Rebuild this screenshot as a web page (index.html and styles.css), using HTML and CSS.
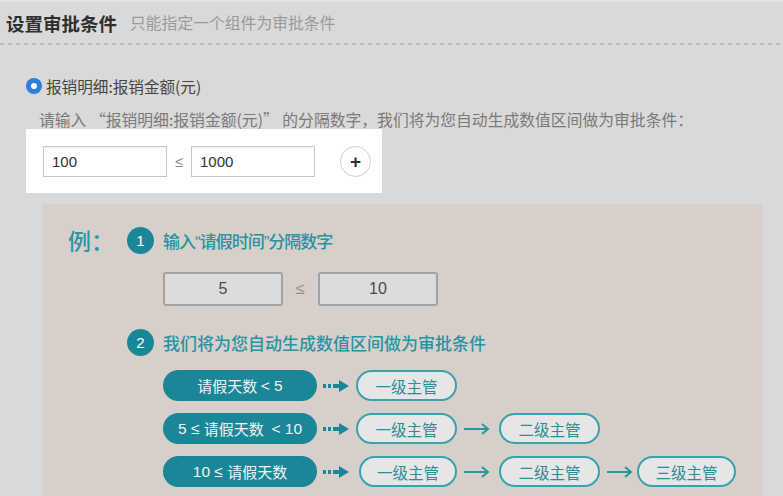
FILE: index.html
```html
<!DOCTYPE html>
<html lang="zh-CN">
<head>
<meta charset="utf-8">
<title>设置审批条件</title>
<link rel="stylesheet" href="styles.css">
</head>
<body>
<div class="page">
  <div class="header">
    <span class="title">设置审批条件</span>
    <span class="subtitle">只能指定一个组件为审批条件</span>
  </div>
  <div class="dash"></div>

  <div class="section">
    <div class="radio-row">
      <span class="radio"><span class="radio-dot"></span></span>
      <span class="radio-label">报销明细:报销金额(元)</span>
    </div>
    <div class="hint">请输入 “报销明细:报销金额(元)” 的分隔数字，我们将为您自动生成数值区间做为审批条件：</div>
    <div class="input-card">
      <div class="field">100</div>
      <span class="le">≤</span>
      <div class="field">1000</div>
      <button class="plus" type="button">+</button>
    </div>
  </div>

  <div class="example">
    <div class="ex-label">例：</div>
    <div class="ex-body">
      <div class="step">
        <span class="num">1</span>
        <span class="step-text step-text-1">输入<span class="q">“</span>请假时间<span class="q">”</span>分隔数字</span>
      </div>
      <div class="demo-inputs">
        <div class="demo-field">5</div>
        <span class="demo-le">≤</span>
        <div class="demo-field">10</div>
      </div>
      <div class="step step2">
        <span class="num">2</span>
        <span class="step-text">我们将为您自动生成数值区间做为审批条件</span>
      </div>
      <div class="flows">
        <div class="flow">
          <span class="cond">请假天数 <span class="lat">&lt; 5</span></span>
          <svg class="dots" width="27" height="12" viewBox="0 0 27 12"><rect x="0" y="4" width="3" height="4"/><rect x="5" y="4" width="3" height="4"/><rect x="10" y="4" width="7" height="4"/><polygon points="16,0 26,6 16,12"/></svg>
          <span class="mgr">一级主管</span>
        </div>
        <div class="flow">
          <span class="cond"><span class="lat">5 ≤ </span>请假天数 <span class="lat"> &lt; 10</span></span>
          <svg class="dots" width="27" height="12" viewBox="0 0 27 12"><rect x="0" y="4" width="3" height="4"/><rect x="5" y="4" width="3" height="4"/><rect x="10" y="4" width="7" height="4"/><polygon points="16,0 26,6 16,12"/></svg>
          <span class="mgr">一级主管</span>
          <svg class="arrow" width="27" height="12" viewBox="0 0 27 12"><path d="M1 6H25M19 1L25 6L19 11"/></svg>
          <span class="mgr">二级主管</span>
        </div>
        <div class="flow flow3">
          <span class="cond"><span class="lat">10 ≤ </span>请假天数</span>
          <svg class="dots" width="27" height="12" viewBox="0 0 27 12"><rect x="0" y="4" width="3" height="4"/><rect x="5" y="4" width="3" height="4"/><rect x="10" y="4" width="7" height="4"/><polygon points="16,0 26,6 16,12"/></svg>
          <span class="mgr mgr-first">一级主管</span>
          <svg class="arrow" width="27" height="12" viewBox="0 0 27 12"><path d="M1 6H25M19 1L25 6L19 11"/></svg>
          <span class="mgr">二级主管</span>
          <svg class="arrow arrow-last" width="27" height="12" viewBox="0 0 27 12"><path d="M1 6H25M19 1L25 6L19 11"/></svg>
          <span class="mgr mgr-last">三级主管</span>
        </div>
      </div>
    </div>
  </div>
</div>
</body>
</html>
```

FILE: styles.css
```css
* { box-sizing: border-box; }
html, body { margin: 0; padding: 0; }
body {
  background: #d9d9d9;
  font-family: "Noto Sans CJK SC", "Liberation Sans", sans-serif;
  overflow: hidden;
  height: 496px;
}
.page {
  border-top: 2px solid #e2e2e2;
}
.header {
  height: 41px;
  display: flex;
  align-items: center;
  padding-left: 6px;
  gap: 13px;
}
.title {
  font-size: 18.5px;
  font-weight: 700;
  color: #2f2f2f;
}
.subtitle {
  font-size: 15.8px;
  color: #9a9a9a;
}
.dash {
  height: 2px;
  background: repeating-linear-gradient(to right, #bdbdbd 0 4px, transparent 4px 8px);
}
.section {
  padding: 31px 0 0 26px;
}
.radio-row {
  display: flex;
  align-items: center;
  gap: 4px;
  height: 20px;
}
.radio {
  width: 16px;
  height: 16px;
  border-radius: 50%;
  background: #2c7fde;
  display: flex;
  align-items: center;
  justify-content: center;
}
.radio-dot {
  width: 6px;
  height: 6px;
  border-radius: 50%;
  background: #ffffff;
}
.radio-label {
  font-size: 15.6px;
  color: #444;
}
.q {
  font-family: "Liberation Sans", sans-serif;
}
.hint {
  margin: 15px 0 0 13px;
  font-size: 15.8px;
  line-height: 18px;
  color: #7a7a7a;
  white-space: nowrap;
}
.input-card {
  margin-top: 0;
  width: 356px;
  height: 64px;
  background: #ffffff;
  display: flex;
  align-items: center;
  padding: 0 0 0 17px;
}
.field {
  width: 124px;
  height: 31px;
  border: 1px solid #c6c6c6;
  box-shadow: inset 0 1px 1px rgba(0,0,0,0.06);
  font-family: "Liberation Sans", sans-serif;
  font-size: 15px;
  color: #333;
  padding-left: 8px;
  display: flex;
  align-items: center;
}
.le {
  width: 24px;
  text-align: center;
  color: #8a8a8a;
  font-family: "Liberation Sans", sans-serif;
  font-size: 15px;
}
.plus {
  margin-left: 25px;
  width: 31px;
  height: 31px;
  border-radius: 50%;
  border: 1px solid #cfcfcf;
  background: #fff;
  font-family: "Liberation Sans", sans-serif;
  font-size: 19px;
  font-weight: 700;
  color: #333;
  padding: 0;
  line-height: 1;
  display: flex;
  align-items: center;
  justify-content: center;
}
.example {
  margin: 11px 0 0 43px;
  width: 720px;
  height: 300px;
  background: #d7d0ca;
  display: flex;
  padding: 23px 0 0 25px;
}
.ex-label {
  width: 59px;
  font-size: 23px;
  line-height: 27px;
  color: #2e95a4;
  font-weight: 500;
}
.ex-body {
  display: flex;
  flex-direction: column;
}
.step {
  display: flex;
  align-items: center;
  gap: 9px;
  height: 27px;
}
.num {
  width: 27px;
  height: 27px;
  border-radius: 50%;
  background: #1a8798;
  color: #fff;
  font-family: "Liberation Sans", sans-serif;
  font-size: 15px;
  display: flex;
  align-items: center;
  justify-content: center;
}
.step-text {
  font-size: 17px;
  color: #2893a2;
  font-weight: 500;
  white-space: nowrap;
}
.step-text-1 {
  letter-spacing: -1px;
}
.demo-inputs {
  display: flex;
  align-items: center;
  margin: 18px 0 0 36px;
}
.demo-field {
  width: 120px;
  height: 34px;
  background: #dcdcdc;
  border: 2px solid #a2a2a2;
  border-radius: 3px;
  display: flex;
  align-items: center;
  justify-content: center;
  font-family: "Liberation Sans", sans-serif;
  font-size: 16px;
  color: #4a4a4a;
}
.demo-le {
  width: 35px;
  text-align: center;
  font-family: "Liberation Sans", sans-serif;
  font-size: 16px;
  color: #8d8d8d;
}
.step2 { margin-top: 23px; }
.flows {
  margin: 14px 0 0 36px;
  display: flex;
  flex-direction: column;
  gap: 12px;
}
.flow {
  display: flex;
  align-items: center;
  height: 31px;
}
.cond {
  width: 154px;
  height: 31px;
  border-radius: 16px;
  background: #1a8798;
  color: #f2f2f2;
  font-size: 15px;
  display: flex;
  align-items: center;
  justify-content: center;
  white-space: pre;
}
.lat {
  font-family: "Liberation Sans", sans-serif;
  font-size: 15.5px;
}
.dots {
  margin: 0 6px 0 6px;
  fill: #1a8798;
}
.mgr {
  width: 101px;
  height: 31px;
  border-radius: 16px;
  border: 2px solid #3aa2ae;
  background: #e6e6e6;
  color: #2b8d99;
  font-size: 15.5px;
  display: flex;
  align-items: center;
  justify-content: center;
}
.mgr-first {
  margin-left: 3px;
  width: 98px;
}
.mgr-last {
  width: 99px;
}
.arrow {
  margin: 0 9px 0 6px;
  fill: none;
  stroke: #2b96a3;
  stroke-width: 2;
}
.arrow-last {
  margin-right: 4px;
}
```
